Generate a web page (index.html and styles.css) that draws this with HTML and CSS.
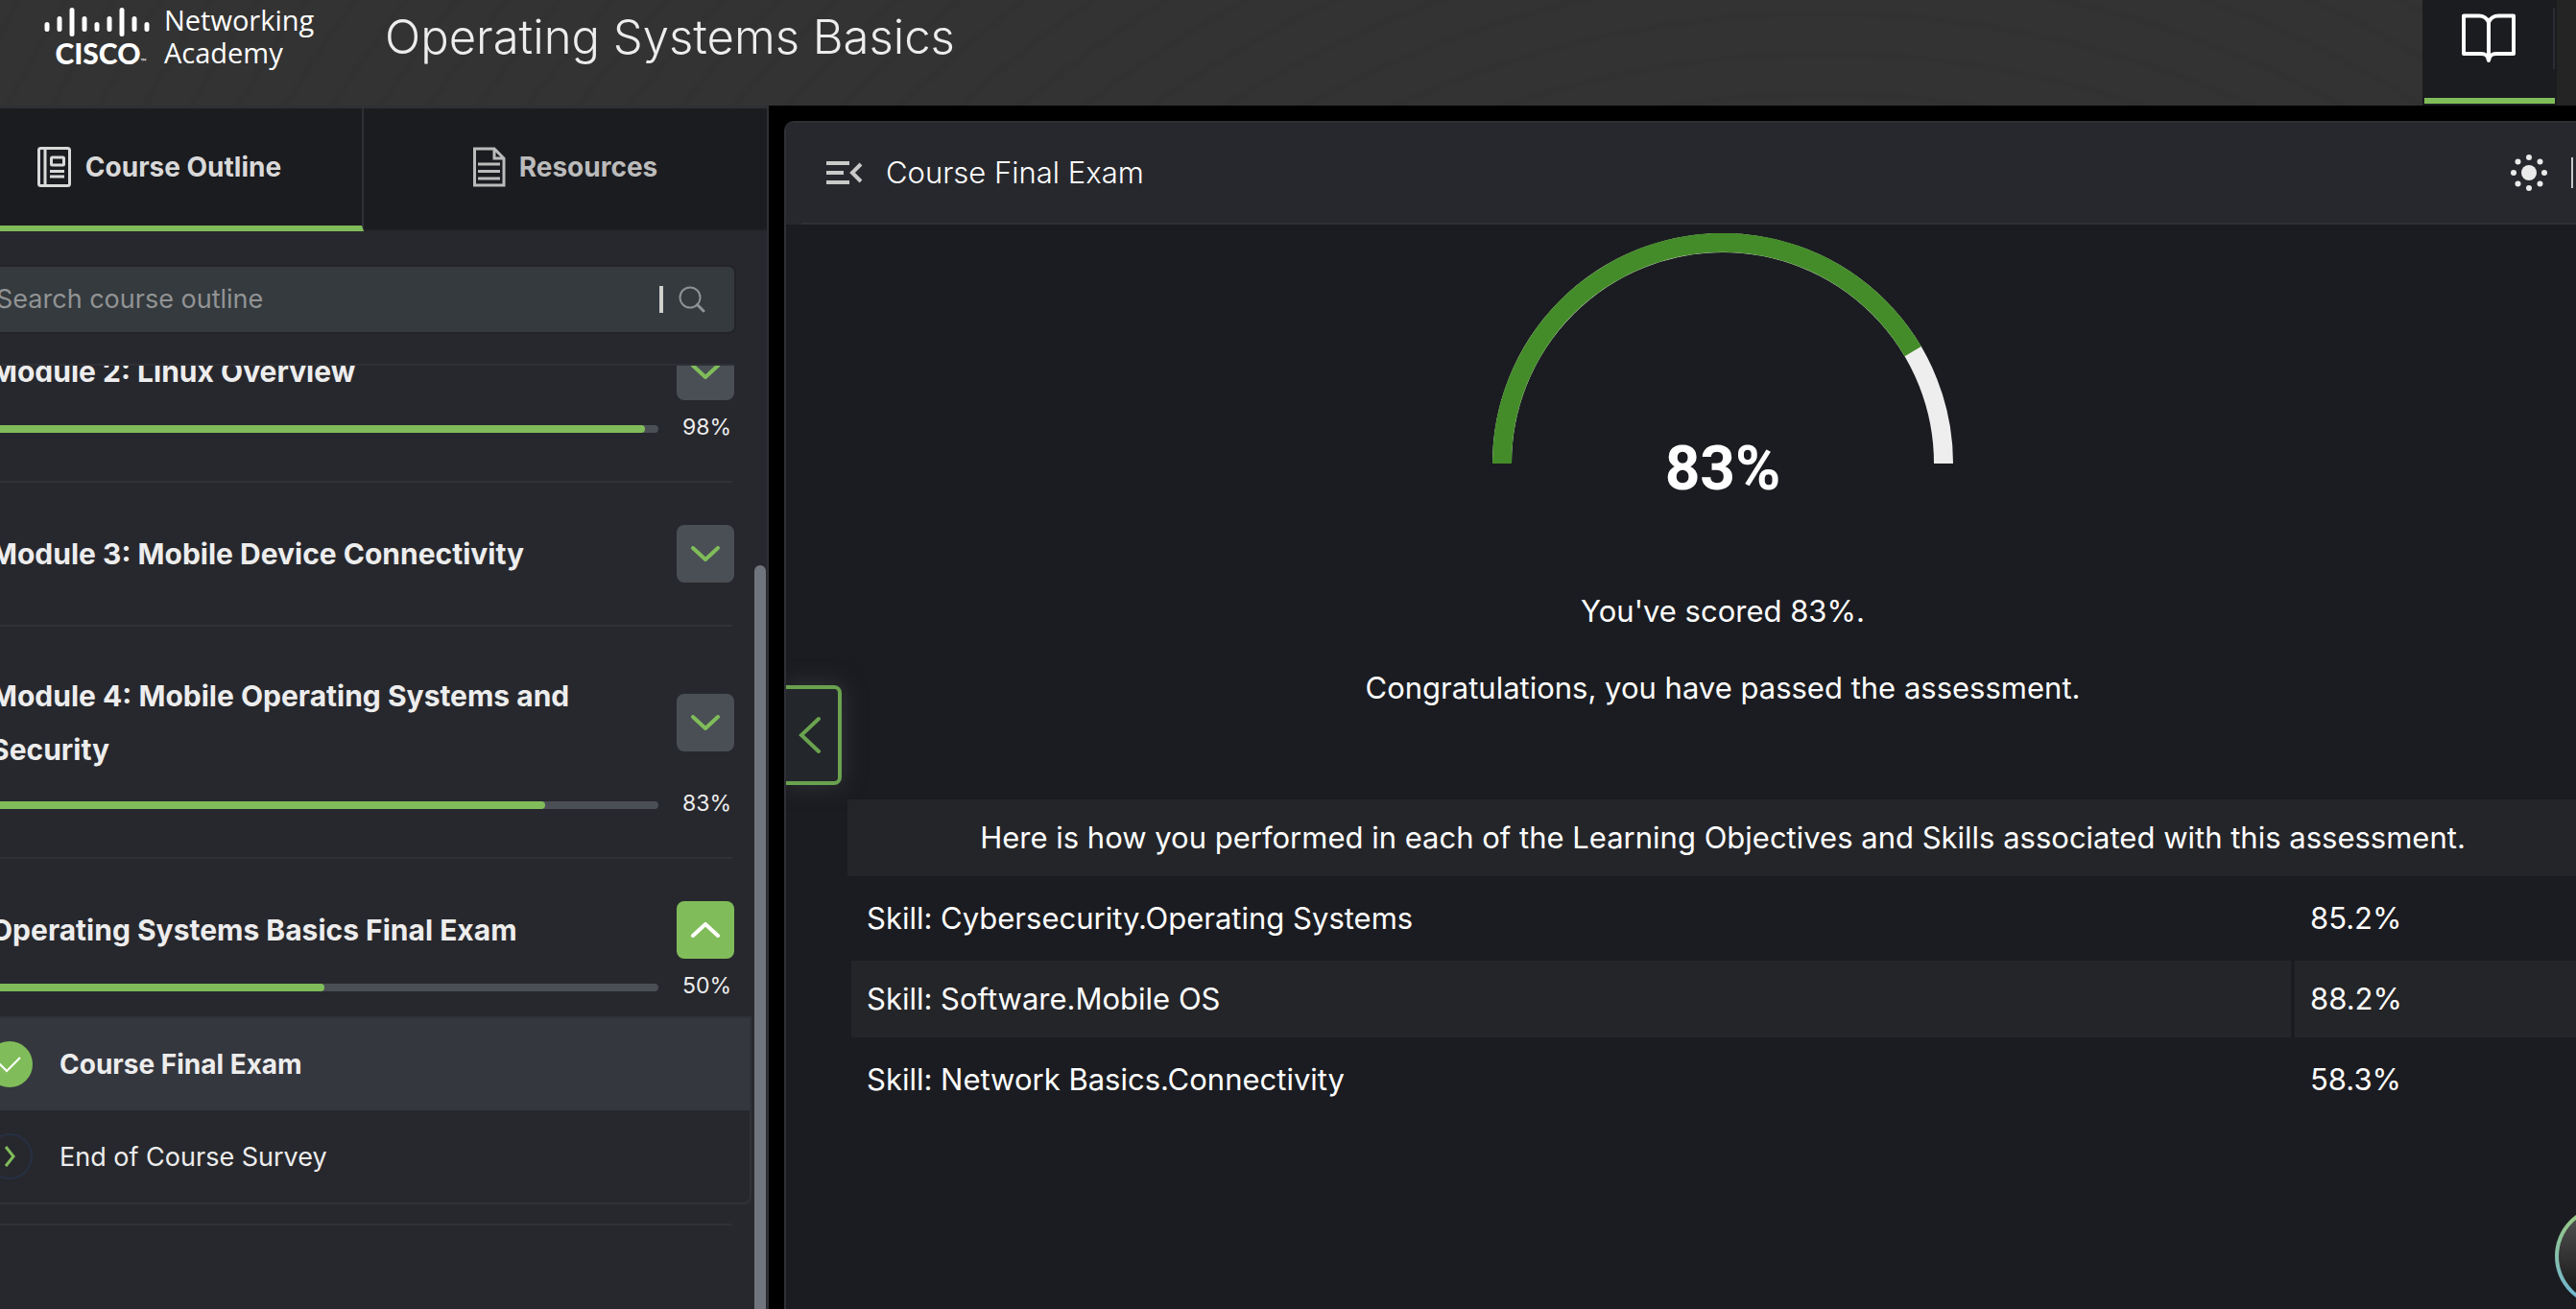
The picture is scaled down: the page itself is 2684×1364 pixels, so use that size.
FILE: index.html
```html
<!DOCTYPE html>
<html lang="en">
<head>
<meta charset="utf-8">
<title>Operating Systems Basics</title>
<link rel="stylesheet" href="styles.css">
</head>
<body>
<div class="app">
  <header class="topbar">
    <a class="brand" href="#" aria-label="Cisco Networking Academy">
      <span class="brand-mark">
        <svg class="brand-bars" viewBox="0 0 110 30" aria-hidden="true">
          <g stroke="#fff" stroke-width="5" stroke-linecap="round">
            <path d="M3 17.500V22.500M16 11.500V22.500M29 2.500V27.500M42 11.500V22.500M55 17.500V22.500M68 11.500V22.500M81 2.500V27.500M94 11.500V22.500M107 17.500V22.500"/>
          </g>
        </svg>
        <span class="brand-cisco">CISCO<small>™</small></span>
      </span>
      <span class="brand-name">Networking<br>Academy</span>
    </a>
    <h1 class="course-name">Operating Systems Basics</h1>
    <nav class="top-nav">
      <button class="nav-book" type="button" aria-label="Course">
        <svg viewBox="0 0 56 52" width="56" height="52" fill="none" stroke="#fff" stroke-width="4" stroke-linejoin="round" stroke-linecap="round" aria-hidden="true">
          <path d="M28 9C26 5 22 2.500 18 2.500H2V42H20C24 42 27 43 28 49C29 43 32 42 36 42H54V2.500H38C34 2.500 30 5 28 9ZM28 9V49"/>
        </svg>
      </button>
    </nav>
  </header>

  <div class="workspace">
    <aside class="sidebar">
      <div class="tabs" role="tablist">
        <button class="tab tab-active" type="button" role="tab" aria-selected="true">
          <svg viewBox="0 0 36 42" width="36" height="42" fill="none" stroke="currentColor" aria-hidden="true">
            <rect x="1.500" y="1.500" width="32" height="39" rx="2" stroke-width="3"/>
            <path d="M8 2V40" stroke-width="3"/>
            <rect x="14.500" y="11" width="13" height="8" rx="1" stroke-width="3"/>
            <path d="M13 25.500H28M13 31H28" stroke-width="3"/>
          </svg>
          <span>Course Outline</span>
        </button>
        <button class="tab" type="button" role="tab" aria-selected="false">
          <svg viewBox="0 0 34 42" width="34" height="42" fill="none" stroke="currentColor" stroke-width="2" aria-hidden="true">
            <path d="M1.500 2H22L32 12V40H1.500ZM22 2V12H32" stroke-width="3"/>
            <path d="M5 18H28M5 25.500H28M5 33H28" stroke-width="3"/>
          </svg>
          <span>Resources</span>
        </button>
      </div>

      <div class="search">
        <input class="search-input" type="search" placeholder="Search course outline" aria-label="Search course outline">
        <span class="search-bar"></span>
        <button class="search-button" type="button" aria-label="Search">
          <svg viewBox="0 0 28 28" width="28" height="28" fill="none" stroke="#8f9294" stroke-width="2" aria-hidden="true">
            <circle cx="12" cy="12" r="10.500"/><path d="M19.500 19.500L26 26" stroke-width="3" stroke-linecap="round"/>
          </svg>
        </button>
      </div>

      <div class="outline">
        <ul class="modules">
          <li class="module">
            <div class="module-head"><h2>Module 2: Linux Overview</h2>
              <button class="toggle" type="button" aria-label="Expand module 2"><svg viewBox="0 0 32 16" aria-hidden="true"><path d="M3 2L16 14L29 2"/></svg></button></div>
            <div class="progress"><div class="track"><div class="fill" style="width:98%"></div></div><span>98%</span></div>
          </li>
          <li class="module">
            <div class="module-head"><h2>Module 3: Mobile Device Connectivity</h2>
              <button class="toggle" type="button" aria-label="Expand module 3"><svg viewBox="0 0 32 16" aria-hidden="true"><path d="M3 2L16 14L29 2"/></svg></button></div>
          </li>
          <li class="module">
            <div class="module-head"><h2>Module 4: Mobile Operating Systems and Security</h2>
              <button class="toggle" type="button" aria-label="Expand module 4"><svg viewBox="0 0 32 16" aria-hidden="true"><path d="M3 2L16 14L29 2"/></svg></button></div>
            <div class="progress"><div class="track"><div class="fill" style="width:83%"></div></div><span>83%</span></div>
          </li>
          <li class="module module-open">
            <div class="module-head"><h2>Operating Systems Basics Final Exam</h2>
              <button class="toggle toggle-open" type="button" aria-label="Collapse final exam"><svg viewBox="0 0 32 16" aria-hidden="true"><path d="M3 14L16 2L29 14"/></svg></button></div>
            <div class="progress"><div class="track"><div class="fill" style="width:50%"></div></div><span>50%</span></div>
            <ul class="lessons">
              <li><a class="lesson lesson-current" href="#">
                <span class="status status-done"><svg viewBox="0 0 32 20" width="32" height="20" aria-hidden="true"><path d="M4 8L13 17L27 3" fill="none" stroke="#fff" stroke-width="2"/></svg></span>
                <span>Course Final Exam</span></a></li>
              <li><a class="lesson" href="#">
                <span class="status status-next"><svg viewBox="0 0 12 22" width="12" height="22" aria-hidden="true"><path d="M2 1L10 11L2 21" fill="none" stroke="#80bd5a" stroke-width="3"/></svg></span>
                <span>End of Course Survey</span></a></li>
            </ul>
          </li>
        </ul>
        <div class="scrollbar"></div>
      </div>
    </aside>

    <main class="content">
      <div class="content-head">
        <button class="icon-button" type="button" aria-label="Close menu">
          <svg viewBox="0 0 38 24" width="38" height="24" fill="none" stroke="#c9c9c9" stroke-width="4" aria-hidden="true">
            <path d="M0 2H24M0 12H18M0 22H24M36 3L27 12L36 21"/>
          </svg>
        </button>
        <h2 class="content-title">Course Final Exam</h2>
        <div class="content-tools">
          <button class="icon-button" type="button" aria-label="Theme">
            <svg viewBox="0 0 40 40" width="40" height="40" fill="#eaeaea" aria-hidden="true">
              <circle cx="20" cy="20" r="8"/><circle cx="20" cy="4" r="3"/><circle cx="20" cy="36" r="3"/><circle cx="4" cy="20" r="3"/><circle cx="36" cy="20" r="3"/><circle cx="8.500" cy="8.500" r="3"/><circle cx="31.500" cy="8.500" r="3"/><circle cx="8.500" cy="31.500" r="3"/><circle cx="31.500" cy="31.500" r="3"/>
            </svg>
          </button>
          <span class="tool-divider"></span>
        </div>
      </div>
      <button class="drawer-handle" type="button" aria-label="Previous">
        <svg viewBox="0 0 24 40" width="24" height="40" aria-hidden="true"><path d="M21 3L3 20L21 37" fill="none" stroke="#6aa24f" stroke-width="4" stroke-linecap="round"/></svg>
      </button>
      <section class="result">
        <div class="gauge">
          <svg viewBox="0 0 480 240" width="480" height="240" fill="none" stroke-width="20" aria-hidden="true">
            <path d="M10 240A230 230 0 0 1 470 240" stroke="#eee"/>
            <path d="M10 240A230 230 0 0 1 123.500 41.500" stroke="#448c29"/>
            <path d="M123 41.800A230 230 0 0 1 438.200 123.100" stroke="#448c29"/>
          </svg>
          <strong class="gauge-value">83%</strong>
        </div>
        <p>You've scored 83%.</p>
        <p>Congratulations, you have passed the assessment.</p>
        <table class="skills">
          <caption>Here is how you performed in each of the Learning Objectives and Skills associated with this assessment.</caption>
          <tbody>
            <tr><td>Skill: Cybersecurity.Operating Systems</td><td class="score">85.2%</td></tr>
            <tr><td>Skill: Software.Mobile OS</td><td class="score">88.2%</td></tr>
            <tr><td>Skill: Network Basics.Connectivity</td><td class="score">58.3%</td></tr>
          </tbody>
        </table>
      </section>
    </main>
  </div>
  <button class="assistant" type="button" aria-label="Assistant"></button>
</div>
</body>
</html>
```
FILE: styles.css
```css
* { box-sizing: border-box; margin: 0; padding: 0; }

body {
  background: #000;
  color: #ededed;
  font-family: Inter, "Liberation Sans", sans-serif;
  overflow: hidden;
}

button { border: 0; background: none; color: inherit; font: inherit; }
a { color: inherit; text-decoration: none; }
ul { list-style: none; }
svg { display: block; }

.app { display: flex; flex-direction: column; height: 100vh; position: relative; }

/* Top bar */
.topbar {
  display: flex;
  align-items: flex-start;
  height: 110px;
  padding: 0 20px 0 45px;
  background:
    linear-gradient(to left, #242424 20px, transparent 20px),
    repeating-radial-gradient(circle at 1900px 1100px, #333 0 30px, #313131 36px, #333 42px);
}
.brand { display: flex; gap: 14px; width: 356px; padding-top: 8px; color: #fff; }
.brand-mark { display: flex; flex-direction: column; align-items: center; width: 112px; }
.brand-bars { width: 110px; height: 30px; }
.brand-cisco { font: 900 30px/34px Lato, sans-serif; padding-left: 8px; white-space: nowrap; }
.brand-cisco small { font-size: 8px; font-weight: 400; }
.brand-name { margin-top: -4px; font: 400 29px/34px "Open Sans", "Noto Sans", sans-serif; }
.course-name { font-size: 49px; font-weight: 300; line-height: 78px; }
.top-nav { margin-left: auto; height: 100%; }
.nav-book {
  position: relative;
  display: flex;
  justify-content: center;
  align-items: flex-start;
  width: 140px;
  height: 100%;
  padding: 14px 2px 0 0;
  border: solid #1b1c20;
  border-width: 0 2px 2px;
  background: #1b1c20;
  box-shadow: inset 0 -6px #80bd5a;
}
.nav-book::after { content: ""; position: absolute; right: 0; top: 8px; width: 2px; height: 64px; background: #2d2e35; }

/* Workspace: the reading pane runs past the right edge */
.workspace { display: grid; grid-template-columns: 801px 1fr; column-gap: 16px; flex: 1; min-height: 0; margin-right: -89px; }

.sidebar { display: flex; flex-direction: column; min-height: 0; border-top: 3px solid #2f3036; border-right: 2px solid #2f3036; background: #27282d; }
.tabs { display: grid; grid-template-columns: 379px 1fr; height: 128px; flex: none; }
.tab {
  display: flex;
  align-items: center;
  justify-content: center;
  gap: 14px;
  padding-bottom: 4px;
  border-bottom: 2px solid #232428;
  background: #1b1c20;
  color: #bbb;
  font-size: 28px;
  font-weight: 700;
}
.tab-active { padding: 0 45px 0 0; border-right: 2px solid #2f3036; border-bottom: 6px solid #80bd5a; color: #d9d9d9; }

.search { display: flex; align-items: center; gap: 16px; height: 68px; margin: 37px 34px 33px 0; padding-right: 30px; flex: none; border-radius: 0 6px 6px 0; background: #343a3e; box-shadow: 0 0 0 2px #232428; }
.search-input { flex: 1; min-width: 0; margin-left: -4px; border: 0; outline: 0; background: none; color: #eee; font: 400 27px/40px Inter, sans-serif; }
.search-input::placeholder { color: #919394; opacity: 1; }
.search-bar { width: 4px; height: 28px; background: #cfcfcb; }

.outline { position: relative; flex: 1; min-height: 0; overflow: hidden; }
.outline::before { content: ""; position: absolute; z-index: 1; top: 0; left: 0; right: 33px; height: 2px; background: #2f3036; }
.modules { margin: -66px 36px 0 -10px; }
.module { padding: 44px 0; border-bottom: 2px solid #2f3136; }
.module:has(.progress) { padding-bottom: 36px; }
.module.module-open { padding-bottom: 20px; }
.module-head { display: flex; align-items: center; justify-content: space-between; margin-right: -2px; }
.module-head h2 { max-width: 640px; font-size: 30px; font-weight: 700; line-height: 56px; }
.toggle { display: grid; place-items: center; flex: none; width: 60px; height: 60px; border-radius: 8px; background: #4a4f55; }
.toggle svg { width: 32px; height: 16px; fill: none; stroke: #80bd5a; stroke-width: 4; stroke-linecap: round; }
.toggle-open { background: #80bd5a; }
.toggle-open svg { stroke: #fff; }
.progress { display: flex; align-items: center; gap: 25px; height: 36px; margin: 12px 0 0; font-size: 23px; }
.progress span { width: 52px; padding-bottom: 4px; }
.track { flex: 1; height: 8px; border-radius: 4px; background: #4a4f55; }
.fill { height: 8px; border-radius: 4px; background: #80bd5a; }

.lessons { margin: 12px -20px 0 -20px; border: 2px solid #303238; border-radius: 0 0 8px 8px; }
.lesson { display: flex; align-items: center; gap: 28px; height: 96px; padding-left: 14px; font-size: 27px; }
.lesson-current { background: #35373f; font-size: 28px; font-weight: 700; }
.status { display: grid; place-items: center; width: 48px; height: 48px; border-radius: 50%; }
.status-done { background: #80bd5a; }
.status-next { border: 2px solid #263044; }
.scrollbar { position: absolute; top: 210px; right: 1px; bottom: -10px; width: 12px; border-radius: 6px; background: #70757d; }

/* Reading pane */
.content { position: relative; display: flex; flex-direction: column; margin-top: 16px; border: 2px solid #2f3036; border-bottom: 0; border-radius: 10px 0 0 0; background: #1b1c21; min-width: 0; overflow: hidden; }
.content-head { display: flex; align-items: center; gap: 24px; height: 106px; padding: 0 90px 3px 42px; background: linear-gradient(#2f3036, #2f3036) 16px 100% / 100% 2px no-repeat #27282d; }
.content-title { color: #fff; font-size: 31px; font-weight: 300; }
.content-tools { display: flex; align-items: center; gap: 24px; margin-left: auto; }
.tool-divider { width: 2px; height: 32px; background: #c9c9c9; }
.drawer-handle { position: absolute; left: 0; top: 586px; width: 58px; height: 104px; padding-right: 4px; display: grid; place-items: center; border: 4px solid #6aa24f; border-left: 0; border-radius: 0 8px 8px 0; background: #23262b; box-shadow: 0 0 24px #34363a; }

.result { display: flex; flex-direction: column; align-items: center; padding: 9px 64px 0; color: #fff; font-size: 31px; line-height: 40px; text-align: center; }
.gauge { display: flex; flex-direction: column; align-items: center; margin-bottom: 92px; }
.gauge-value { margin-top: -30px; font: 700 64px/72px Roboto, sans-serif; }
.result p { margin-bottom: 40px; }
.skills { width: 100%; margin-top: 56px; border-spacing: 4px; text-align: left; }
.skills caption { height: 80px; padding: 20px 0; background: #242529; text-align: center; white-space: nowrap; }
.skills td { height: 80px; padding: 0 16px; }
.skills tr:nth-child(even) td { background: #242529; }
.skills .score { width: 312px; }

.assistant { position: absolute; right: -84px; bottom: 2px; width: 106px; height: 106px; border: 4px solid transparent; border-radius: 50%; background: linear-gradient(#555, #111) padding-box, linear-gradient(#9ccb7c, #6db3dc) border-box; }
```
